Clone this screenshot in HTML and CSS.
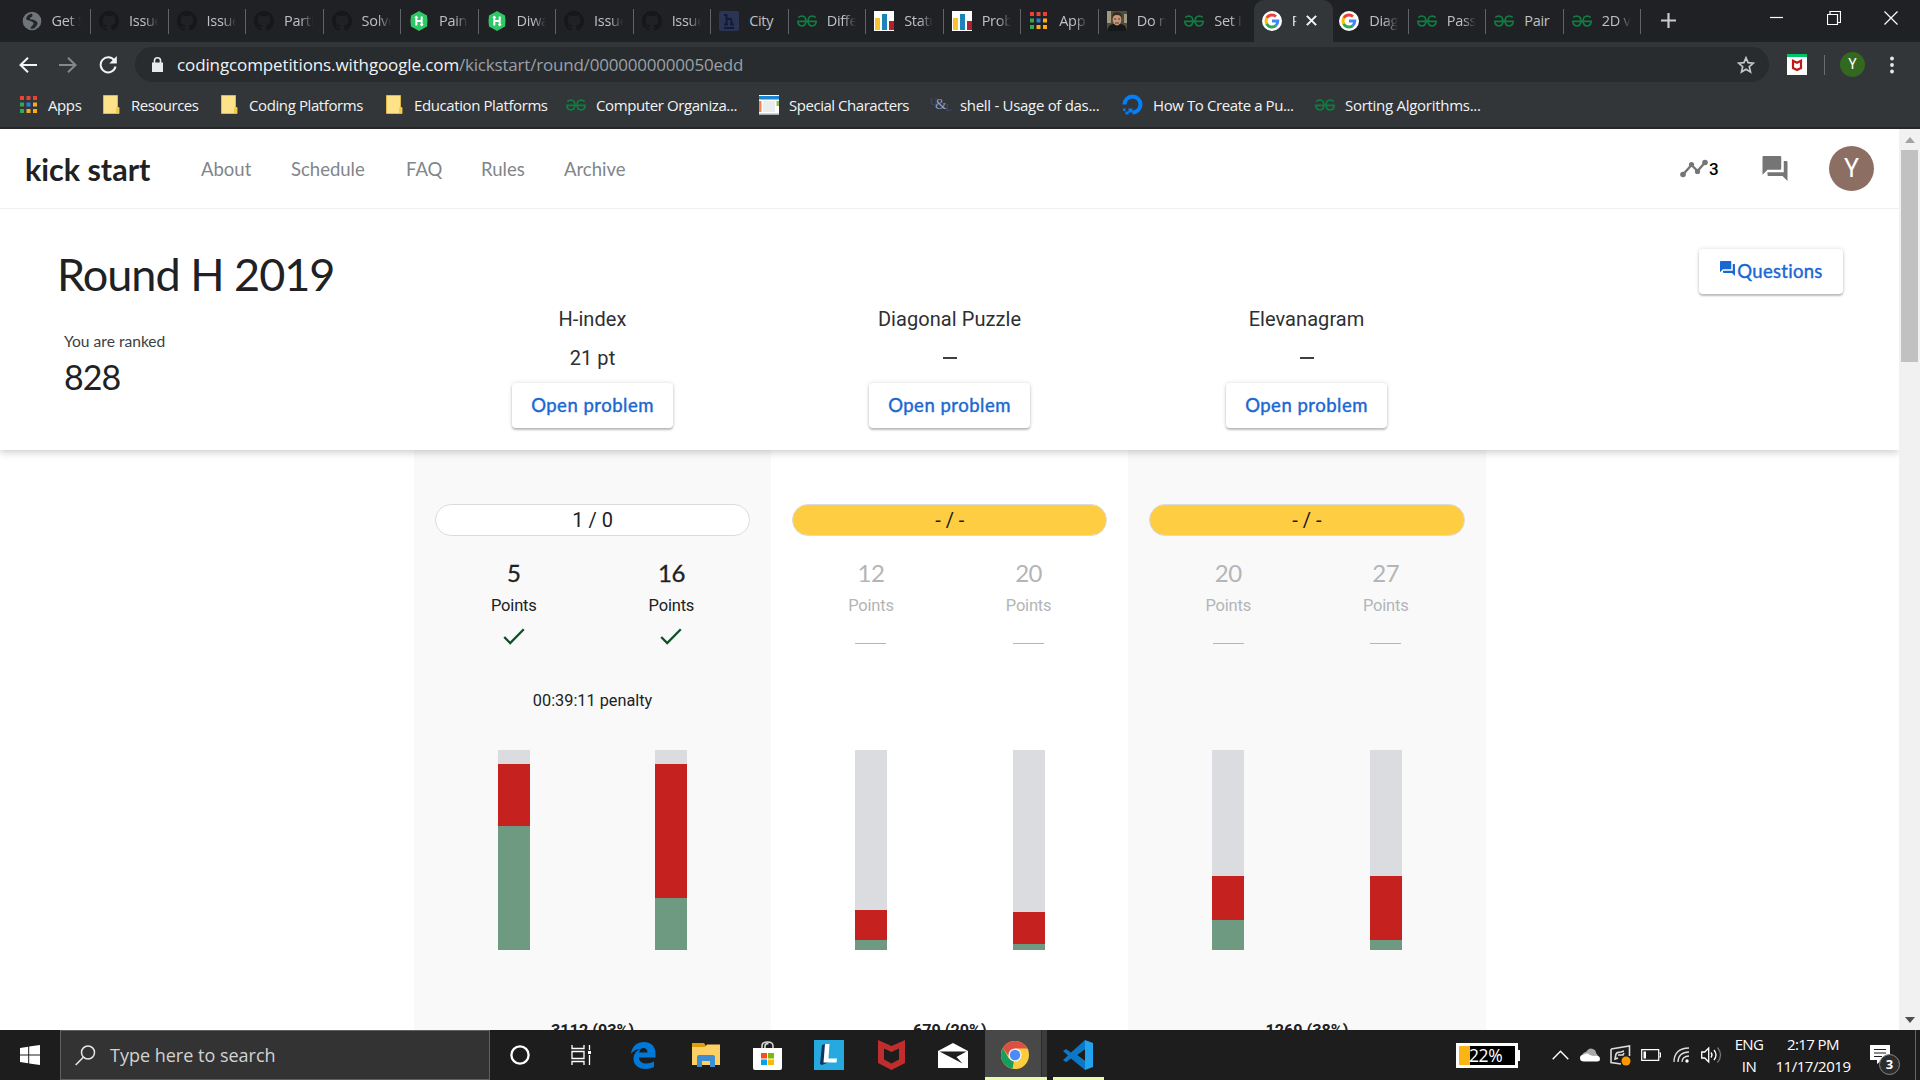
FILE: index.html
```
<!DOCTYPE html>
<html lang="en">
<head>
<meta charset="utf-8">
<title>Kick Start - Round H 2019</title>
<link rel="stylesheet" href="styles.css">
</head>
<body>
<svg class="sprite" width="0" height="0">
  <symbol id="github" viewBox="0 0 16 16"><path fill="#15171a" d="M8 0C3.58 0 0 3.58 0 8c0 3.54 2.29 6.53 5.47 7.59.4.07.55-.17.55-.38v-1.49c-2.01.37-2.53-.49-2.69-.94-.09-.23-.48-.94-.82-1.13-.28-.15-.68-.52-.01-.53.63-.01 1.08.58 1.23.82.72 1.21 1.87.87 2.33.66.07-.52.28-.87.51-1.07-1.78-.2-3.64-.89-3.64-3.95 0-.87.31-1.59.82-2.15-.08-.2-.36-1.02.08-2.12 0 0 .67-.21 2.2.82a7.6 7.6 0 0 1 4 0c1.53-1.04 2.2-.82 2.2-.82.44 1.1.16 1.92.08 2.12.51.56.82 1.27.82 2.15 0 3.07-1.87 3.75-3.65 3.95.29.25.54.73.54 1.48v2.2c0 .21.15.46.55.38A8 8 0 0 0 16 8c0-4.42-3.58-8-8-8z"/></symbol>
  <symbol id="globe" viewBox="0 0 20 20"><circle cx="10" cy="10" r="9.3" fill="#70757a"/><path fill="#24272a" d="M10 2.500c-3 .5-5.500 2.500-6 5.500 1 1.500 3 1 4.500 2s3 .5 3 2.500-2.500 2-3 5c1.500.3 3 .2 4-.2.500-1.500 3-2.300 3-4.800s-2-2.500-3.500-3.500-4 .2-4-1.500S11 6 10.500 4.500z"/></symbol>
  <symbol id="hackerrank" viewBox="0 0 18 20"><path fill="#2ec866" d="M9 0l8 4.500Q18 10 17 15.500L9 20 1 15.500Q0 10 1 4.500z"/><path fill="none" stroke="#fff" stroke-width="2" d="M6.300 5.500v9M11.700 5.500v9M6.300 10h5.400"/><path fill="#fff" d="M4.300 7l2-2.500 2 2.500zM9.700 13l2 2.500 2-2.500z"/></symbol>
  <symbol id="hacker-h" viewBox="0 0 20 20"><rect width="20" height="20" rx="2" fill="#2c3454"/><path fill="none" stroke="#131b38" stroke-width="2" d="M5 4h2.500v9M7.500 9q5-3 5 1v3M5 13.500h4M11 13.500h4M5 17h10"/></symbol>
  <symbol id="gfg" viewBox="0 0 22 14"><path fill="none" stroke="#0f7d42" stroke-width="1.900" d="M1.500 3.300Q3 1.500 5.200 1.500 9.800 1.700 9.800 7T5.200 12.500Q1.200 12 1 7.500h20Q20.800 12 16.800 12.500 12.200 12.300 12.200 7T16.800 1.500Q19 1.500 20.500 3.300"/></symbol>
  <symbol id="bars" viewBox="0 0 20 20"><path fill="#fff" d="M0 0h20v20H0z"/><rect x="1" y="7" width="5" height="12" fill="#f9c22e"/><rect x="8" y="3" width="5" height="16" fill="#1b84b8"/><rect x="15" y="10" width="5" height="9" fill="#b41f2d"/></symbol>
  <symbol id="apps" viewBox="0 0 17 17"><path fill="#ea4335" d="M0 0h4v4H0zM6.500 0h4v4h-4zM13 0h4v4h-4z"/><path fill="#34a853" d="M0 6.500h4v4H0zM0 13h4v4H0z"/><path fill="#2a7de1" d="M6.500 6.500h4v4h-4z"/><path fill="#fbab17" d="M13 6.500h4v4h-4zM6.500 13h4v4h-4zM13 13h4v4h-4z"/></symbol>
  <symbol id="person" viewBox="0 0 20 20"><path fill="#494f3c" d="M0 0h20v20H0z"/><path fill="#a49880" d="M0 0h4v12H0zM17 3h3v9h-3z"/><path fill="#16181a" d="M0 20q1-6 6-7h8q5 1 6 7z"/><ellipse cx="10" cy="8.500" rx="4.300" ry="6" fill="#c99779"/><path fill="#3a291f" d="M5 8q-.5-7 5-7t5 7q-.5-4-5-4T5 8z"/><path stroke="#5c392a" d="M7 8h2.200M11 8h2.200M8 12h4"/></symbol>
  <symbol id="google" viewBox="0 0 20 20"><circle cx="10" cy="10" r="10" fill="#fff"/><g fill="none" stroke-width="2.900"><path stroke="#ea4335" d="M4.700 7.200Q6.300 4 10 4q2.300 0 4 1.500"/><path stroke="#fbbc05" d="M4.900 6.800Q3.200 10 4.900 13.200"/><path stroke="#34a853" d="M4.700 12.800Q6.300 16 10 16q2.300 0 3.900-1.400"/><path stroke="#4285f4" d="M10 10h5.800q0 3-2.100 4.700"/></g></symbol>
  <symbol id="folder" viewBox="0 0 17 19"><path fill="#fde28a" stroke="#e0b844" d="M.5.500h14v12h1.500v6H.5z"/><path fill="#f2c94c" d="M13 12.500h3v5.500h-3z"/></symbol>
  <symbol id="forum" viewBox="2 2 20 20"><path d="M21 6h-2v9H6v2c0 .55.45 1 1 1h11l4 4V7c0-.55-.45-1-1-1zm-4 6V3c0-.55-.45-1-1-1H3c-.55 0-1 .45-1 1v14l4-4h10c.55 0 1-.45 1-1z"/></symbol>
  <symbol id="check" viewBox="0 0 22 17"><path fill="none" stroke="#0d5127" stroke-width="2.300" d="M1.200 9l6 6L20.800 1.200"/></symbol>
  <symbol id="shield" viewBox="0 0 27 30"><path fill="#c02d2d" d="M0 0l13.500 6L27 0v23l-13.500 7L0 23z"/><path fill="#1d1d1d" d="M6 8.500l7.500 3.500 7.500-3.500V19.500l-7.500 4-7.500-4z"/></symbol>
</svg>

<header class="browser">
  <div class="tabstrip">
    <div class="tab"><svg class="fav"><use href="#globe"/></svg><span>Get S</span></div>
    <div class="tab"><svg class="fav"><use href="#github"/></svg><span>Issues</span></div>
    <div class="tab"><svg class="fav"><use href="#github"/></svg><span>Issues</span></div>
    <div class="tab"><svg class="fav"><use href="#github"/></svg><span>Partic</span></div>
    <div class="tab"><svg class="fav"><use href="#github"/></svg><span>Solve</span></div>
    <div class="tab"><svg class="fav"><use href="#hackerrank"/></svg><span>Paint</span></div>
    <div class="tab"><svg class="fav"><use href="#hackerrank"/></svg><span>Diwali</span></div>
    <div class="tab"><svg class="fav"><use href="#github"/></svg><span>Issues</span></div>
    <div class="tab"><svg class="fav"><use href="#github"/></svg><span>Issues</span></div>
    <div class="tab"><svg class="fav"><use href="#hacker-h"/></svg><span class="fits">City</span></div>
    <div class="tab"><svg class="fav"><use href="#gfg"/></svg><span>Differ</span></div>
    <div class="tab"><svg class="fav"><use href="#bars"/></svg><span>Statu</span></div>
    <div class="tab"><svg class="fav"><use href="#bars"/></svg><span>Probl</span></div>
    <div class="tab"><svg class="fav fav-apps"><use href="#apps"/></svg><span>App</span></div>
    <div class="tab"><svg class="fav"><use href="#person"/></svg><span>Do n</span></div>
    <div class="tab last"><svg class="fav"><use href="#gfg"/></svg><span>Set in</span></div>
    <div class="tab active"><svg class="fav"><use href="#google"/></svg><span>R</span><svg class="close" viewBox="0 0 10 10"><path d="M.8.8l8.400 8.400M9.200.8L.8 9.200"/></svg></div>
    <div class="tab"><svg class="fav"><use href="#google"/></svg><span>Diago</span></div>
    <div class="tab"><svg class="fav"><use href="#gfg"/></svg><span>Passi</span></div>
    <div class="tab"><svg class="fav"><use href="#gfg"/></svg><span class="fits">Pair</span></div>
    <div class="tab"><svg class="fav"><use href="#gfg"/></svg><span>2D ve</span></div>
    <svg class="newtab" viewBox="0 0 15 15"><path d="M7.500 0v15M0 7.500h15"/></svg>
    <div class="winctl">
      <svg width="14" height="14" viewBox="0 0 14 14"><path d="M0 6.500h13"/></svg>
      <svg width="14" height="14" viewBox="0 0 14 14"><path d="M.5 3.500h10v10H.5zM3 3V.5h10.500v11H11"/></svg>
      <svg width="14" height="14" viewBox="0 0 14 14"><path d="M.5.500l13 13M13.500.5l-13 13"/></svg>
    </div>
  </div>
  <div class="toolbar">
    <svg class="nav-i" width="18" height="16" viewBox="0 0 18 16"><path d="M18 8H2M9 .8L1.500 8 9 15.200"/></svg>
    <svg class="nav-i dim" width="18" height="16" viewBox="0 0 18 16"><path d="M0 8h16M9 .8L16.500 8 9 15.200"/></svg>
    <svg class="nav-i" width="18" height="18" viewBox="0 0 18 18"><path d="M15.300 4.500A7.500 7.500 0 1 0 16.500 10.500"/><path class="solid" d="M17.800 0v7.500h-7.500z"/></svg>
    <div class="omnibox">
      <svg width="11" height="15" viewBox="0 0 11 15"><path fill="#e8eaed" d="M0 5.500h11V15H0z"/><path fill="none" stroke="#e8eaed" stroke-width="1.600" d="M2.500 6V3.500a3 2.700 0 0 1 6 0V6"/></svg>
      <div class="url"><span class="host">codingcompetitions.withgoogle.com</span><span class="path">/kickstart/round/0000000000050edd</span></div>
      <svg class="star" width="18" height="18" viewBox="0 0 18 18"><path d="M9 1.800l2.100 4.900 5.200.5-4 3.500 1.200 5.200L9 13.200l-4.500 2.700 1.200-5.200-4-3.500 5.200-.5z"/></svg>
    </div>
    <svg class="ext" width="20" height="21" viewBox="0 0 20 21"><path fill="#fff" d="M0 0h20v21H0z"/><path fill="#00c566" d="M0 0h20v3H0z"/><path fill="none" stroke="#c01818" stroke-width="2.200" d="M6 6.800l4 2 4-2v7.200l-4 2-4-2z"/></svg>
    <i class="vline"></i>
    <span class="profile">Y</span>
    <svg class="dots" width="4" height="18" viewBox="0 0 4 18"><circle cx="2" cy="2.500" r="1.900"/><circle cx="2" cy="9" r="1.900"/><circle cx="2" cy="15.500" r="1.900"/></svg>
  </div>
  <nav class="bookmarks">
    <a class="bk-apps"><svg width="17" height="17"><use href="#apps"/></svg>Apps</a>
    <a class="bk-res"><svg width="17" height="19"><use href="#folder"/></svg>Resources</a>
    <a class="bk-cod"><svg width="17" height="19"><use href="#folder"/></svg>Coding Platforms</a>
    <a class="bk-edu"><svg width="17" height="19"><use href="#folder"/></svg>Education Platforms</a>
    <a class="bk-org"><svg width="20" height="14"><use href="#gfg"/></svg>Computer Organiza...</a>
    <a class="bk-chr"><svg width="20" height="20" viewBox="0 0 20 20"><path fill="#fff" d="M0 0h20v20H0z"/><path fill="#1a87d0" d="M0 1h20v3.500H0z"/><path fill="#f08a4b" d="M0 6h2.500v11H0z"/><path fill="#8cc152" d="M17.500 6H20v5h-2.500z"/><path fill="#ececec" d="M4 6h12v11H4z"/><path fill="#aaa" d="M0 18.500h20V20H0z"/></svg>Special Characters</a>
    <a class="bk-shl"><span class="ul"><i>U</i>&amp;<i class="l">L</i></span>shell - Usage of das...</a>
    <a class="bk-how"><svg width="21" height="21" viewBox="0 0 21 21"><path fill="none" stroke="#0080ff" stroke-width="4" d="M10.500 18.500a8 8 0 1 0-8-8"/><path fill="#0080ff" d="M6.500 14.500h4v4h-4zM3.500 17.500h3v3h-3zM1 14.500h2.500V17H1z"/></svg>How To Create a Pu...</a>
    <a class="bk-srt"><svg width="20" height="14"><use href="#gfg"/></svg>Sorting Algorithms...</a>
  </nav>
</header>

<main class="viewport">
  <div class="page">
    <div class="site-header">
      <span class="logo">kick start</span>
      <nav class="site-nav"><a class="n-about">About</a><a class="n-sched">Schedule</a><a class="n-faq">FAQ</a><a class="n-rules">Rules</a><a>Archive</a></nav>
      <div class="user">
        <svg width="28" height="20" viewBox="0 0 28 20"><path fill="none" stroke="#757575" stroke-width="2.400" d="M3 15.500L11.500 6 17.500 12 25 3.500"/><g fill="#757575"><circle cx="3" cy="15.500" r="2.800"/><circle cx="11.500" cy="5.500" r="2.600"/><circle cx="17.500" cy="12.500" r="2.600"/><circle cx="25" cy="3.500" r="2.800"/></g></svg>
        <b>3</b>
        <svg class="chat" width="26" height="25"><use href="#forum"/></svg>
        <span class="avatar">Y</span>
      </div>
    </div>
    <section class="round">
      <div class="summary">
        <h1>Round H 2019</h1>
        <div class="rank-label">You are ranked</div>
        <div class="rank">828</div>
      </div>
      <div class="problem"><div class="name">H-index</div><div class="score">21 pt</div><a class="btn">Open problem</a></div>
      <div class="problem"><div class="name">Diagonal Puzzle</div><div class="score"><i></i></div><a class="btn">Open problem</a></div>
      <div class="problem"><div class="name">Elevanagram</div><div class="score"><i></i></div><a class="btn">Open problem</a></div>
      <div class="actions"><a class="btn questions"><svg width="17" height="15"><use href="#forum"/></svg>Questions</a></div>
    </section>
    <section class="results">
      <article class="col shaded">
        <div class="pill">1 / 0</div>
        <div class="sets">
          <div class="set"><b>5</b><span>Points</span><svg width="22" height="17"><use href="#check"/></svg></div>
          <div class="set"><b>16</b><span>Points</span><svg width="22" height="17"><use href="#check"/></svg></div>
        </div>
        <div class="penalty">00:39:11 penalty</div>
        <div class="charts">
          <div class="bar"><i class="wrong" style="height:62px"></i><i class="right" style="height:124px"></i></div>
          <div class="bar"><i class="wrong" style="height:134px"></i><i class="right" style="height:52px"></i></div>
        </div>
        <div class="total">3112 (93%)</div>
      </article>
      <article class="col">
        <div class="pill todo">- / -</div>
        <div class="sets off">
          <div class="set"><b>12</b><span>Points</span><i></i></div>
          <div class="set"><b>20</b><span>Points</span><i></i></div>
        </div>
        <div class="penalty"></div>
        <div class="charts">
          <div class="bar"><i class="wrong" style="height:30px"></i><i class="right" style="height:10px"></i></div>
          <div class="bar"><i class="wrong" style="height:32px"></i><i class="right" style="height:6px"></i></div>
        </div>
        <div class="total">679 (20%)</div>
      </article>
      <article class="col shaded">
        <div class="pill todo">- / -</div>
        <div class="sets off">
          <div class="set"><b>20</b><span>Points</span><i></i></div>
          <div class="set"><b>27</b><span>Points</span><i></i></div>
        </div>
        <div class="penalty"></div>
        <div class="charts">
          <div class="bar"><i class="wrong" style="height:44px"></i><i class="right" style="height:30px"></i></div>
          <div class="bar"><i class="wrong" style="height:64px"></i><i class="right" style="height:10px"></i></div>
        </div>
        <div class="total">1269 (38%)</div>
      </article>
    </section>
  </div>
  <div class="scrollbar">
    <svg width="10" height="6" viewBox="0 0 10 6"><path fill="#a3a3a3" d="M5 0l5 6H0z"/></svg>
    <i class="thumb"></i>
    <svg class="down" width="10" height="6" viewBox="0 0 10 6"><path fill="#505050" d="M0 0h10L5 6z"/></svg>
  </div>
</main>

<footer class="taskbar">
  <div class="start"><svg width="20" height="20" viewBox="0 0 20 20"><path fill="#fff" d="M0 2.900l8.200-1.200v7.800H0zM9.200 1.500L20 0v9.500H9.200zM0 10.500h8.200v7.800L0 17.100zM9.200 10.500H20V20L9.200 18.500z"/></svg></div>
  <div class="search"><svg width="21" height="21" viewBox="0 0 21 21"><circle cx="13" cy="7.500" r="6.500"/><path d="M8.300 12.300L.7 20"/></svg>Type here to search</div>
  <div class="task"><svg width="20" height="20" viewBox="0 0 20 20"><circle cx="10" cy="10" r="8.600" fill="none" stroke="#fff" stroke-width="2.300"/></svg></div>
  <div class="task"><svg width="21" height="20" viewBox="0 0 21 20"><path fill="none" stroke="#fff" stroke-width="1.300" d="M1 0v3.500h12V0M1 6.500h12v7H1zM1 20v-3.500h12V20M18.500 0v5M18.500 10v10"/><path fill="#fff" d="M17 6h3v3h-3z"/></svg></div>
  <div class="task"><svg width="25" height="27" viewBox="0 0 25 27"><path fill="#0078d7" d="M0 12C1 4 6 0 13 0c7.500 0 11.500 5 11.500 11.500v4H8c0 4 3.500 6 7.500 6 3 0 5-.8 7.500-2v5.500c-2.500 1.300-5.500 2-8.500 2C7 27 2.500 22.500 2.500 17c0-4.500 2.500-8.500 7-10C5 7 2 9 0 12zm8.200-1.500h8.300c0-3-1.500-4.500-4-4.500s-4 1.800-4.300 4.500z"/></svg></div>
  <div class="task"><svg width="28" height="24" viewBox="0 0 28 24"><path fill="#e09c0c" d="M0 0h12l2 3v3H0z"/><path fill="#fdd065" d="M0 4h13l2-2.500h13V22H0z"/><path fill="#3d8fd1" d="M5 24V14q0-2 2-2h14q2 0 2 2v10h-5v-6h-8v6z"/></svg></div>
  <div class="task"><svg width="29" height="29" viewBox="0 0 29 29"><path fill="none" stroke="#ddd" stroke-width="1.500" d="M9 8V5q0-4 5.500-4T20 5v3M12 8V5q0-2.500 3.500-2.500"/><path fill="#fff" d="M0 7h29v20q0 2-2 2H2q-2 0-2-2z"/><path fill="#f25022" d="M8 12h6v5.500H8z"/><path fill="#7fba00" d="M15 12h6v5.500h-6z"/><path fill="#00a4ef" d="M8 18.500h6V24H8z"/><path fill="#ffb900" d="M15 18.500h6V24h-6z"/></svg></div>
  <div class="task"><svg width="30" height="30" viewBox="0 0 30 30"><path fill="#26a9de" d="M0 0h30v30H0z"/><path fill="#12345f" d="M8 5l3-1v15h11L8 25l-2-1z"/><path fill="#fff" d="M11 4h4.500l-1 14.500H23l-.5 4H9.500z"/></svg></div>
  <div class="task"><svg width="27" height="30"><use href="#shield"/></svg></div>
  <div class="task"><svg width="30" height="25" viewBox="0 0 30 25"><path fill="#fff" d="M0 8L15 0l15 8v17H0z"/><path fill="#1d1d1d" d="M1.500 8.500h27L18.500 14l6 6.500L14 15z"/></svg></div>
  <div class="task open"><svg width="28" height="28" viewBox="0 0 28 28"><circle cx="14" cy="14" r="14" fill="#fbcd3d"/><path fill="#189d5a" d="M14 14l-2.500 13.800A14 14 0 0 1 1.900 7l6 10.500z"/><path fill="#dd4f43" d="M14 7.400h12.300A14 14 0 0 0 1.900 7l5.600 8z"/><circle cx="14" cy="14" r="6.600" fill="#f1f1f1"/><circle cx="14" cy="14" r="5.200" fill="#4c8bf5"/></svg></div>
  <div class="task running"><svg width="30" height="30" viewBox="0 0 30 30"><path fill="#0a78c4" d="M22 0L8 12.500 3 9 0 11l5 4.500L0 20l3 2.300 5-3.800L22 30z"/><path fill="#23a2ee" d="M22 0l8 3v24l-8 3V21.500L13.500 15 22 8.500z"/><path fill="#1d1d1d" d="M22 9v12l-8-6z"/></svg></div>

  <div class="tray">
    <span class="battery"><i></i>22%</span>
    <svg class="chev" width="17" height="10" viewBox="0 0 17 10"><path d="M.7 9.200L8.500 1.200l7.800 8"/></svg>
    <svg class="cloud" width="20" height="14" viewBox="0 0 20 14"><path fill="#a9a9a9" d="M2 8q1-4 4-4 3-5 7-3 3 1 3 4l3 4z"/><path fill="#fff" d="M4 13.500q-4 0-4-3.500t4-3.500q3-2 6 .5l3 1q7-1 7 3 0 2.500-3 2.500z"/></svg>
    <svg class="pad" width="22" height="21" viewBox="0 0 22 21"><path fill="none" stroke="#ddd" stroke-width="1.600" d="M1 4L19.500 1v10M1 4v13.500l10 1.500M8 13l-3 1 1-5q1-2 5-2l3-1M8 10h5l1-2"/><circle cx="16" cy="16" r="4.500" fill="#ff9800"/></svg>
    <svg class="batt" width="20" height="12" viewBox="0 0 20 12"><path fill="none" stroke="#fff" stroke-width="1.200" d="M.7.700h17v10.600H.7zM18.500 4h1v4h-1"/><path fill="#fff" d="M2.500 2.500h2.500v7H2.500z"/></svg>
    <svg class="wifi" width="17" height="16" viewBox="0 0 17 16"><g fill="none" stroke="#ddd" stroke-width="1.300"><path d="M1 15Q1 1.500 16 1M5 15Q5 5.500 16 5"/><path d="M9 15Q9 9.500 16 9"/></g><circle cx="14" cy="14" r="1.700" fill="#fff"/></svg>
    <svg class="vol" width="21" height="18" viewBox="0 0 21 18"><g fill="none" stroke="#fff" stroke-width="1.300"><path d="M.7 6h3l4-4v14l-4-4h-3zM10 6.500q2 2.500 0 5M13 4q4 5 0 10"/><path stroke="#777" d="M16.500 1.500q6 7.500 0 15"/></g></svg>
    <div class="lang"><span>ENG</span><span>IN</span></div>
    <div class="clock"><span class="time">2:17 PM</span><span class="date">11/17/2019</span></div>
    <div class="notify"><svg width="20" height="19" viewBox="0 0 20 19"><path fill="#fff" d="M0 0h20v15H12l-5 4v-4H0z"/><path stroke="#1d1d1d" stroke-width="1.200" d="M4 4.500h12M4 8h12M4 11.500h8"/></svg><b>3</b></div>
  </div>
</footer>
</body>
</html>
```
FILE: styles.css
```
* { box-sizing: border-box; }
body { margin: 0; width: 1920px; height: 1080px; overflow: hidden; display: flex; flex-direction: column; font-family: Roboto, sans-serif; color: #202124; background: #fff; }
svg { display: block; flex: none; }
.sprite { position: absolute; }

/* browser frame */
.browser { flex: none; height: 129px; background: #323639; border-bottom: 2px solid #25282a; font-family: "Open Sans", sans-serif; }
.tabstrip { display: flex; height: 42px; padding-left: 13.500px; background: #202124; }
.tab { display: flex; align-items: center; flex: none; width: 77.530px; padding: 0 0 1px 8px; color: #bdc1c6; font-size: 14.500px; letter-spacing: -.3px; background: linear-gradient(#5f6368, #5f6368) right 9px / 1px 25px no-repeat; }
.tab.last { background: none; }
.tab .fav { width: 20px; height: 20px; margin-right: 10px; }
.tab .fav-apps { width: 17px; height: 17px; margin: 0 12px 0 1px; }
.tab span { width: 29px; overflow: hidden; white-space: nowrap; -webkit-mask-image: linear-gradient(90deg, #000 55%, transparent); mask-image: linear-gradient(90deg, #000 55%, transparent); }
.tab span.fits { -webkit-mask-image: none; mask-image: none; }
.tab.active { width: 79px; margin-right: -1.500px; background: #323639; border-radius: 10px 10px 0 0; }
.tab.active span { width: 5px; color: #e8eaed; }
.close { width: 11px; height: 11px; margin-left: 9px; fill: none; stroke: #f1f3f4; stroke-width: 1.900; }
.newtab { width: 15px; height: 15px; margin: 13px 0 0 20px; stroke: #c8cbce; stroke-width: 2.200; }
.winctl { display: flex; gap: 43px; margin: 11px 22px 0 auto; fill: none; stroke: #fff; stroke-width: 1.200; }
.toolbar { display: flex; align-items: center; height: 45px; padding-left: 19px; }
.nav-i { margin-right: 22px; fill: none; stroke: #f1f3f4; stroke-width: 2; }
.nav-i.dim { stroke: #85888b; }
.nav-i + .nav-i + .nav-i { margin-right: 18px; }
.nav-i .solid { fill: #f1f3f4; stroke: none; }
.omnibox { display: flex; align-items: center; width: 1634px; height: 35px; padding: 0 14px 0 17px; border-radius: 18px; background: #282c2f; }
.url { display: flex; margin-left: 14px; font-size: 17px; line-height: 24px; }
.host { color: #f1f3f4; letter-spacing: -.12px; }
.path { color: #9aa0a6; letter-spacing: -.2px; }
.star { margin-left: auto; fill: none; stroke: #c4c7ca; stroke-width: 1.700; }
.ext { margin-left: 18px; }
.vline { width: 1px; height: 20px; margin: 0 15px 0 17px; background: #6a6d70; }
.profile { width: 25px; height: 25px; border-radius: 50%; background: #33691e; color: #fff; font: 14px/25px Roboto, sans-serif; text-align: center; }
.dots { margin-left: 25px; fill: #e8eaed; }
.bookmarks { display: flex; height: 35px; margin-left: 20px; color: #f1f3f4; font-size: 15px; letter-spacing: -.4px; }
.bookmarks a { display: flex; align-items: center; flex: none; white-space: nowrap; }
.bookmarks svg, .ul { margin-right: 10px; }
.bookmarks .bk-apps svg, .bk-res svg, .bk-cod svg, .bk-edu svg { margin-right: 11px; }
.bk-apps { width: 83px; }
.bookmarks .bk-res { width: 118px; letter-spacing: -.5px; }
.bk-cod { width: 165px; }
.bk-edu { width: 180px; }
.bk-org { width: 193px; }
.bk-chr { width: 171px; letter-spacing: -.47px; }
.bk-shl { width: 192px; letter-spacing: -.3px; }
.bk-how { width: 193px; }
.bk-srt { letter-spacing: -.28px; }
.ul { display: flex; align-items: center; width: 20px; color: #8a9cc4; font: 15px "Liberation Serif", serif; letter-spacing: -1px; }
.ul i { align-self: flex-start; width: 5px; color: #3f4d6b; font-size: 10px; font-style: normal; }
.ul .l { align-self: flex-end; }

/* web page */
.viewport { display: flex; flex: none; height: 901px; overflow: hidden; }
.page { width: 1899px; }
.site-header { display: flex; align-items: center; height: 80px; padding: 0 25px; border-bottom: 1px solid #f1f1f1; font-family: Lato, sans-serif; }
.logo { width: 176px; font-size: 30.500px; font-weight: 700; line-height: 36px; }
.site-nav { display: flex; padding-top: 1px; color: #80868b; font-size: 18.500px; }
.n-about { width: 90px; }
.n-sched { width: 115px; }
.n-faq { width: 75px; }
.n-rules { width: 83px; }
.user { display: flex; align-items: center; margin-left: auto; }
.user b { width: 53px; margin-left: 1px; color: #000; font: 500 17px Roboto, sans-serif; }
.chat { fill: #757575; }
.avatar { width: 45px; height: 45px; margin-left: 41px; border-radius: 50%; background: #8d6e63; color: #fff; font: 25px/46px Roboto, sans-serif; text-align: center; }
.round { position: relative; display: flex; height: 241px; padding-left: 57px; background: #fff; box-shadow: 0 2px 8px rgba(0, 0, 0, .22); clip-path: inset(0 0 -16px 0); }
.summary { width: 357px; font-family: Lato, sans-serif; }
h1 { margin: 37px 0 0; font-size: 45px; font-weight: 400; line-height: 56px; letter-spacing: -1px; white-space: nowrap; }
.rank-label { margin: 29px 0 0 7px; font-size: 15.600px; line-height: 20px; color: #3c4043; }
.rank { margin: 5px 0 0 7px; font-size: 34px; line-height: 42px; letter-spacing: -1px; }
.problem { display: flex; flex-direction: column; align-items: center; width: 357px; padding-top: 95px; font-size: 20px; letter-spacing: .06px; color: #2d2f33; }
.name, .score { height: 30px; line-height: 30px; }
.score { margin: 9px 0 10px; }
.score i { display: block; width: 14px; height: 2px; margin-top: 14px; background: #3c4043; }
.btn { display: flex; justify-content: center; width: 161px; height: 45px; border-radius: 4px; background: #fff; box-shadow: 0 2px 2px rgba(0, 0, 0, .22), 0 0 4px rgba(0, 0, 0, .15); color: #1967d2; font: 400 18.500px/45px Lato, sans-serif; letter-spacing: .5px; -webkit-text-stroke: .4px #1967d2; }
.actions { margin: 40px 56px 0 auto; }
.questions { width: 144px; letter-spacing: .3px; }
.questions svg { margin: 12px 1px 0 0; fill: #1967d2; stroke: none; }
.results { display: flex; height: 580px; padding-left: 414px; }
.col { width: 357.200px; padding: 54px 21px 0; }
.shaded { background: #f9f9f9; }
.pill { height: 32px; border: 1px solid #dadce0; border-radius: 16px; background: #fff; font-size: 20px; line-height: 31px; text-align: center; }
.pill.todo { background: #ffcd42; }
.sets { display: grid; grid-template-columns: 1fr 1fr; margin-top: 22px; }
.set { display: flex; flex-direction: column; align-items: center; height: 110px; }
.set b { font: 400 24px/30px Lato, sans-serif; letter-spacing: -.5px; }
.set span { margin: 6px 0 13px; font-size: 16.500px; line-height: 24px; letter-spacing: -.2px; }
.set svg { margin-top: -3px; }
.sets:not(.off) b { -webkit-text-stroke: .3px; }
.off { color: #b3b5b7; }
.off i { width: 31px; height: 1px; margin-top: 12px; background: #b3b5b7; }
.penalty { height: 24px; margin-top: 20px; font-size: 16.300px; line-height: 26px; text-align: center; }
.charts { display: grid; grid-template-columns: 1fr 1fr; justify-items: center; margin-top: 38px; }
.bar { display: flex; flex-direction: column; justify-content: flex-end; width: 32px; height: 200px; background: #dadce0; }
.wrong { background: #c5221f; }
.right { background: #6f9a82; }
.total { margin-top: 69px; font-size: 16.200px; font-weight: 700; line-height: 24px; text-align: center; }
.scrollbar { display: flex; flex-direction: column; align-items: center; width: 21px; padding: 8px 0 7px; background: #f1f1f1; }
.thumb { width: 17px; height: 212px; margin-top: 7px; background: #c1c1c1; }
.down { margin-top: auto; }

/* taskbar */
.taskbar { display: flex; flex: none; height: 50px; background: #1d1d1d; color: #fff; font-family: "Open Sans", sans-serif; }
.start { display: grid; place-items: center; width: 60px; }
.search { display: flex; align-items: center; width: 430px; padding-left: 14px; border: 1px solid #606060; background: #333; color: #d2d2d2; font-size: 18px; }
.search svg { margin-right: 14px; fill: none; stroke: #e8e8e8; stroke-width: 1.500; }
.task { display: grid; place-items: center; width: 61.900px; flex: none; }
.search + .task { margin-left: -1px; }
.task.open { background: linear-gradient(#e9fcae, #e9fcae) bottom / 100% 3px no-repeat, linear-gradient(90deg, #484848 56px, #2a2a2a 56px, #2a2a2a 57px, #3c3c3c 57px); margin-left: 1px; padding-right: 3px; }
.task.running { background: linear-gradient(#e9fcae, #e9fcae) 6px bottom / 51px 3px no-repeat; }
.tray { display: flex; align-items: center; margin-left: auto; }
.battery { position: relative; width: 62px; height: 25px; margin-right: 34px; border: 3px solid #fff; background: linear-gradient(90deg, #fdb515 11px, #000 11px); font-size: 17.500px; line-height: 18px; padding-left: 10px; letter-spacing: -.4px; }
.battery i { position: absolute; right: -5px; top: 4px; width: 2px; height: 11px; background: #fff; }
.chev { fill: none; stroke: #fff; stroke-width: 1.400; }
.cloud { margin-left: 11px; }
.pad { margin-left: 10px; }
.batt { margin-left: 9px; }
.wifi { margin-left: 12px; }
.vol { margin-left: 11px; }
.lang, .clock { display: flex; flex-direction: column; align-items: center; font-size: 15px; line-height: 22.500px; letter-spacing: -.45px; }
.lang { width: 28px; margin-left: 13px; letter-spacing: -.6px; }
.clock { width: 76px; margin-left: 12px; }
.time { letter-spacing: -.6px; }
.notify { position: relative; height: 50px; width: 50px; margin-left: 19px; padding-top: 15px; background: linear-gradient(#666, #666) 45px 0 / 1px 50px no-repeat; }
.notify b { position: absolute; left: 9px; top: 24px; width: 21px; height: 21px; border: 1px solid #888; border-radius: 50%; background: #2c2c2c; font-size: 13px; line-height: 19px; text-align: center; }
```
